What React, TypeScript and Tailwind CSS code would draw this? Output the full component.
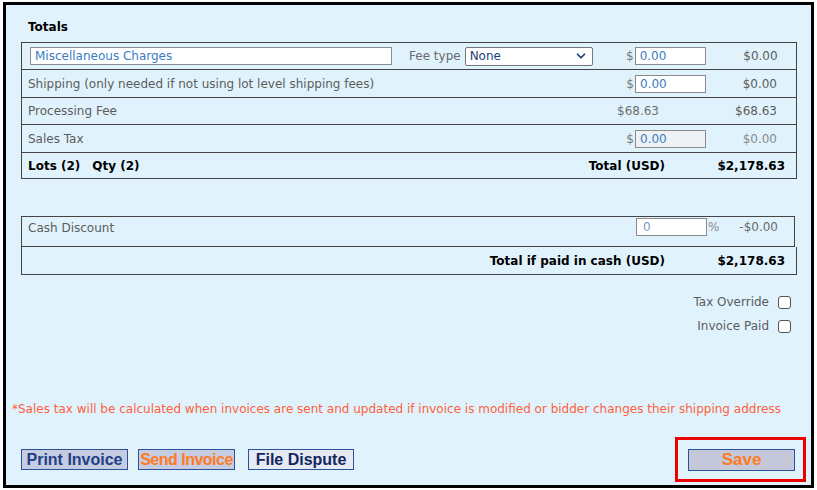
import { ChevronDown } from 'lucide-react';

const font = 'font-["DejaVu_Sans",Verdana,sans-serif]';

function Money({ value, disabled }: { value: string; disabled?: boolean }) {
  return (
    <div className="flex items-center justify-end">
      <span className="text-[#7a7a7a]">$</span>
      <input
        readOnly
        value={value}
        className={`ml-[1px] h-[18px] w-[71px] border border-[#8a8a8a] px-[4px] text-[12px] text-[#3b7dc4] outline-none ${
          disabled ? 'bg-[#eef2f4]' : 'bg-white'
        }`}
      />
    </div>
  );
}

function Checkbox() {
  return <span className="inline-block h-[13px] w-[13px] rounded-[3px] border border-[#555] bg-white" />;
}

export default function App() {
  return (
    <div className={`h-[490px] w-[817px] bg-white pt-[2px] pl-[3px] ${font}`}>
      <div className="flex h-[486px] w-[811px] flex-col border-[3px] border-black bg-[#e0f3fd] text-[12px] text-[#5c5c5c]">
        <div className="pl-[22px] pt-[13px] text-[12px] font-bold text-black">Totals</div>

        {/* totals table */}
        <div className="ml-[15px] mt-[6px] w-[776px] border border-[#444]">
          <div className="flex h-[27px] items-center border-b border-[#444]">
            <input
              readOnly
              value="Miscellaneous Charges"
              className="ml-[8px] h-[18px] w-[362px] border border-[#8a8a8a] bg-white px-[4px] text-[12px] text-[#3b7dc4] outline-none"
            />
            <span className="ml-[17px] text-[#6a6a6a]">Fee type</span>
            <div className="ml-[4px] flex h-[19px] w-[128px] items-center justify-between rounded-[2px] border border-[#777] bg-white px-[4px] text-[12px] text-[#1e3f7a]">
              <span>None</span>
              <ChevronDown className="h-[14px] w-[14px] text-[#1e3f7a]" strokeWidth={3} />
            </div>
            <div className="w-[113px]">
              <Money value="0.00" />
            </div>
            <span className="w-[72px] text-right">$0.00</span>
          </div>
          <div className="flex h-[28px] items-center border-b border-[#444] pl-[6px]">
            <span className="flex-1">Shipping (only needed if not using lot level shipping fees)</span>
            <div className="w-[110px]">
              <Money value="0.00" />
            </div>
            <span className="w-[72px] pr-[1px] text-right">$0.00</span>
            <span className="w-[18px]" />
          </div>
          <div className="flex h-[27px] items-center border-b border-[#444] pl-[6px]">
            <span className="flex-1">Processing Fee</span>
            <span className="w-[134px] pl-[21px] text-[#6e6e6e]">$68.63</span>
            <span className="w-[48px] pr-[1px] text-right">$68.63</span>
            <span className="w-[18px]" />
          </div>
          <div className="flex h-[28px] items-center border-b border-[#444] pl-[6px]">
            <span className="flex-1">Sales Tax</span>
            <div className="w-[110px] text-[#9a9a9a]">
              <Money value="0.00" disabled />
            </div>
            <span className="w-[72px] pr-[1px] text-right text-[#8a8a8a]">$0.00</span>
            <span className="w-[18px]" />
          </div>
          <div className="flex h-[25px] items-center pl-[6px] font-bold text-black">
            <span className="flex-1">
              Lots (2)<span className="ml-[12px]">Qty (2)</span>
            </span>
            <span>Total (USD)</span>
            <span className="w-[131px] pr-[11px] text-right">$2,178.63</span>
          </div>
        </div>

        {/* cash discount */}
        <div className="ml-[15px] mt-[37px] w-[776px]">
          <div className="mr-[2px] flex h-[31px] items-start border border-[#444] pl-[6px] pt-[1px]">
            <span className="flex-1 pt-[1px]">Cash Discount</span>
            <input
              readOnly
              value="0"
              className="h-[18px] w-[71px] border border-[#8a8a8a] bg-white px-[6px] text-[12px] text-[#7a9cc4] outline-none"
            />
            <span className="ml-[1px] w-[9px] text-[#8a8a8a]">%</span>
            <span className="w-[77px] pr-[16px] text-right text-[#6a6a6a]">-$0.00</span>
          </div>
          <div className="flex h-[28px] items-center border border-t-0 border-[#444] font-bold text-black">
            <span className="flex-1 text-right">Total if paid in cash (USD)</span>
            <span className="w-[131px] pr-[11px] text-right">$2,178.63</span>
          </div>
        </div>

        <div className="mt-[18px] flex flex-col items-end gap-[6px] pr-[20px]">
          <div className="flex items-center gap-[9px]">
            <span>Tax Override</span>
            <Checkbox />
          </div>
          <div className="flex items-center gap-[9px]">
            <span>Invoice Paid</span>
            <Checkbox />
          </div>
        </div>

        <div className="mt-[65px] pl-[6px] text-[12px] text-[#ff5f3b]">
          *Sales tax will be calculated when invoices are sent and updated if invoice is modified or bidder changes their
          shipping address
        </div>

        <div className="mt-[19px] flex items-center justify-between pl-[15px] pr-[5px] font-['Liberation_Sans',Arial,sans-serif]">
          <div className="flex items-center gap-[10px]">
            <button className="h-[21px] w-[107px] whitespace-nowrap border border-[#2e4f9a] bg-[#c6cde2] text-[16px] font-bold leading-none text-[#1f3f86]">
              Print Invoice
            </button>
            <button className="h-[21px] w-[97px] whitespace-nowrap border border-[#2e4f9a] bg-[#c6cde2] text-[16px] font-bold leading-none tracking-[-0.5px] text-[#ff7a22]">
              Send Invoice
            </button>
            <button className="ml-[3px] h-[21px] w-[106px] whitespace-nowrap border border-[#2e4f9a] bg-[#e6eaf4] text-[16px] font-bold leading-none text-[#13275e]">
              File Dispute
            </button>
          </div>
          <div className="flex h-[45px] w-[131px] items-center justify-center border-[3px] border-[#ee0000]">
            <button className="ml-[2px] h-[22px] w-[107px] border border-[#2e4f9a] bg-[#c4c8d9] text-[17px] font-bold leading-none text-[#ff7a22]">
              Save
            </button>
          </div>
        </div>
      </div>
    </div>
  );
}
